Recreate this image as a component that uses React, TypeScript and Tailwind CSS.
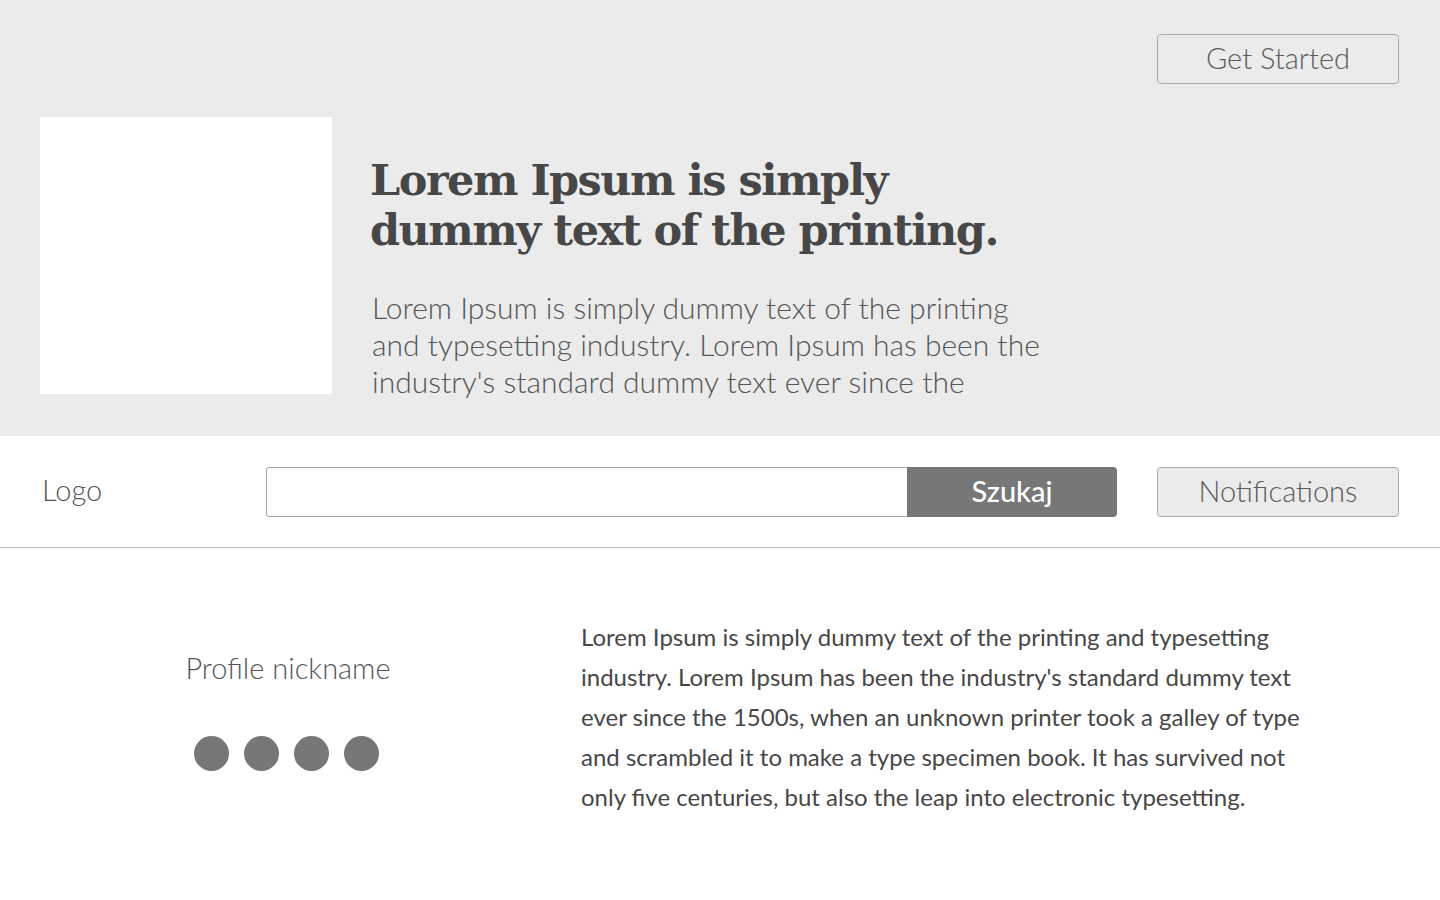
const Dots = () => (
  <div className="flex gap-[15px] mt-[48px] -ml-[3px]">
    {[0, 1, 2, 3].map((i) => (
      <span key={i} className="block w-[35px] h-[35px] rounded-full bg-[#777777]" />
    ))}
  </div>
);

export default function App() {
  return (
    <div
      className="min-h-screen w-full bg-white text-[#555555]"
      style={{ fontFamily: "Lato, 'Open Sans', sans-serif" }}
    >
      {/* hero */}
      <section className="bg-[#ebebeb] h-[436px] px-[40px] pt-[34px]">
        <div className="flex justify-end pr-[1px]">
          <button className="w-[242px] h-[50px] pb-[3px] border border-[#aaaaaa] rounded-[4px] text-[29px] font-light text-[#5a5a5a] leading-none">
            Get Started
          </button>
        </div>
        <div className="flex mt-[33px]">
          <div className="w-[292px] h-[277px] bg-white shrink-0" />
          <div className="ml-[38px] pt-[38px]">
            <h1
              className="text-[43px] leading-[50px] font-bold text-[#474747] tracking-[-1.5px]"
              style={{ fontFamily: "'DejaVu Serif', serif" }}
            >
              Lorem Ipsum is simply
              <br />
              dummy text of the printing.
            </h1>
            <p className="mt-[34px] ml-[2px] whitespace-nowrap text-[30px] leading-[37px] font-light text-[#555555]">
              Lorem Ipsum is simply dummy text of the printing
              <br />
              and typesetting industry. Lorem Ipsum has been the
              <br />
              industry's standard dummy text ever since the
            </p>
          </div>
        </div>
      </section>

      {/* nav */}
      <nav className="h-[112px] border-b border-[#bbbbbb] flex items-center px-[42px]">
        <div className="w-[224px] shrink-0 pb-[3px] text-[29px] font-light text-[#555555]">Logo</div>
        <div className="flex h-[50px] w-[851px] shrink-0">
          <input
            className="flex-1 min-w-0 h-full border border-r-0 border-[#aaaaaa] rounded-l-[4px] bg-white outline-none"
            type="text"
          />
          <button className="w-[210px] shrink-0 h-full pb-[3px] bg-[#777777] text-white text-[29px] font-medium rounded-r-[4px] leading-none">
            Szukaj
          </button>
        </div>
        <button className="ml-[40px] w-[242px] shrink-0 h-[50px] pb-[3px] bg-[#ebebeb] border border-[#aaaaaa] rounded-[4px] text-[29px] font-light text-[#5a5a5a] leading-none">
          Notifications
        </button>
      </nav>

      {/* profile */}
      <main className="flex pt-[62px]">
        <div className="w-[576px] shrink-0 flex flex-col items-center pt-[38px]">
          <div className="text-[29px] font-light text-[#555555] leading-[40px]">Profile nickname</div>
          <Dots />
        </div>
        <p className="ml-[5px] pt-[7px] whitespace-nowrap text-[24px] leading-[40px] text-[#474747]">
          Lorem Ipsum is simply dummy text of the printing and typesetting
          <br />
          industry. Lorem Ipsum has been the industry's standard dummy text
          <br />
          ever since the 1500s, when an unknown printer took a galley of type
          <br />
          and scrambled it to make a type specimen book. It has survived not
          <br />
          only five centuries, but also the leap into electronic typesetting.
        </p>
      </main>
    </div>
  );
}
